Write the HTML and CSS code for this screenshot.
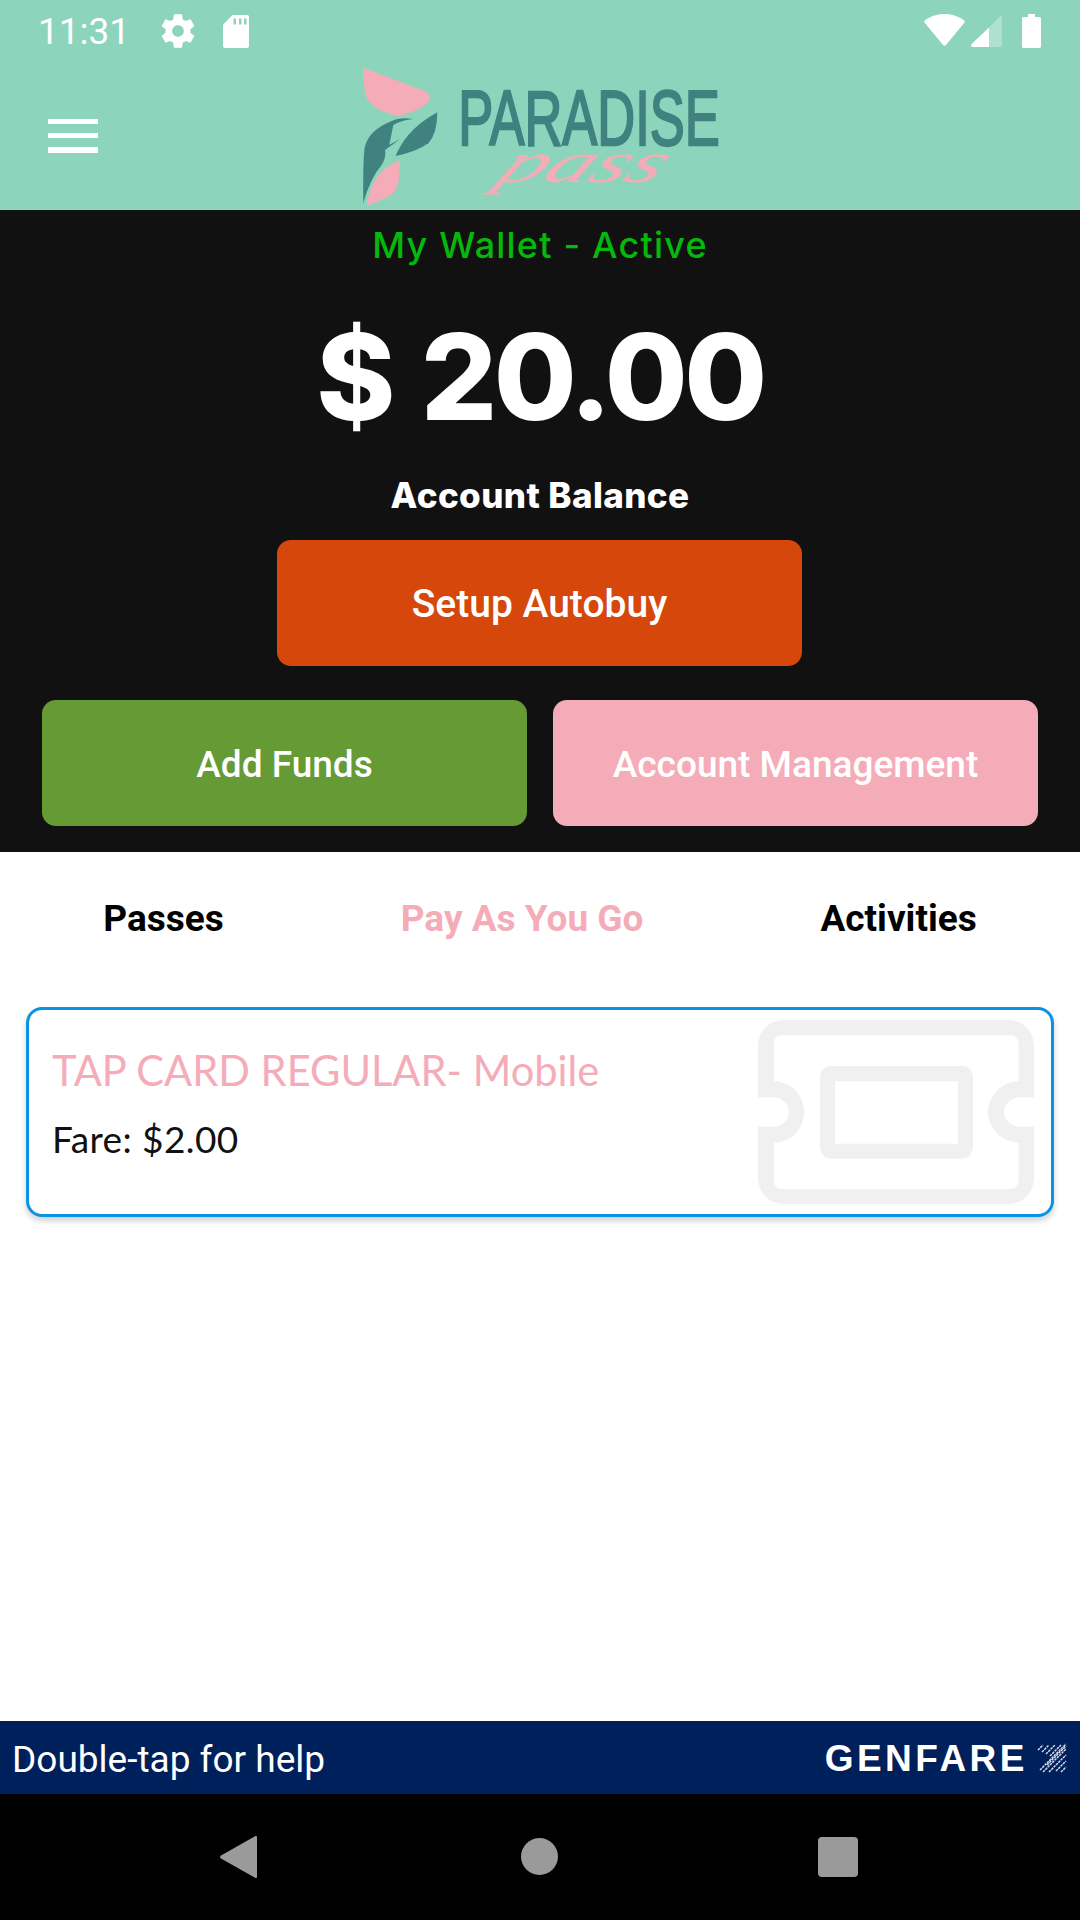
FILE: index.html
```html
<!DOCTYPE html>
<html lang="en">
<head>
<meta charset="utf-8">
<title>Paradise Pass</title>
<link rel="stylesheet" href="styles.css">
</head>
<body>
<div class="app">
  <header class="header">
    <div class="status">
      <div class="status-left">
        <span class="clock">11:31</span>
        <svg class="ic-gear" viewBox="0 0 24 24"><path fill="#fff" d="M19.43 12.98c.04-.32.07-.64.07-.98s-.03-.66-.07-.98l2.11-1.65c.19-.15.24-.42.12-.64l-2-3.46c-.12-.22-.39-.3-.61-.22l-2.49 1c-.52-.4-1.08-.73-1.69-.98l-.38-2.65C14.46 2.18 14.25 2 14 2h-4c-.25 0-.46.18-.49.42l-.38 2.65c-.61.25-1.17.59-1.69.98l-2.49-1c-.23-.09-.49 0-.61.22l-2 3.46c-.13.22-.07.49.12.64l2.11 1.65c-.04.32-.07.65-.07.98s.03.66.07.98l-2.11 1.65c-.19.15-.24.42-.12.64l2 3.46c.12.22.39.3.61.22l2.49-1c.52.4 1.08.73 1.69.98l.38 2.65c.03.24.24.42.49.42h4c.25 0 .46-.18.49-.42l.38-2.65c.61-.25 1.17-.59 1.69-.98l2.49 1c.23.09.49 0 .61-.22l2-3.46c.12-.22.07-.49-.12-.64l-2.11-1.65zM12 15.5c-1.93 0-3.5-1.57-3.5-3.5s1.57-3.5 3.5-3.5 3.5 1.57 3.5 3.5-1.57 3.5-3.5 3.5z"/></svg>
        <svg class="ic-sd" viewBox="0 0 26 33"><path fill="#fff" fill-rule="evenodd" d="M10 0h14a2 2 0 0 1 2 2v29a2 2 0 0 1-2 2H2a2 2 0 0 1-2-2V10.500a1.500 1.500 0 0 1 .5-1.200L9 .6A1.500 1.500 0 0 1 10 0zM10.500 3.500v6h2.500v-6zM16 3.500v6h2.500v-6zM21 3.500v6h2.500v-6z"/></svg>
      </div>
      <div class="status-right">
        <svg class="ic-wifi" viewBox="0 0 41 32"><path fill="#fff" d="M20.500 0C28 0 35 2.500 40.300 6.500c.6.500.7 1.300.2 1.900L22 31c-.8 1-2.200 1-3 0L.5 8.400C0 7.800.100 7 .7 6.500 6 2.500 13 0 20.500 0z"/></svg>
        <svg class="ic-signal" viewBox="0 0 31 31"><path fill="#fff" opacity=".3" d="M29 .4c.8-.7 2-.2 2 .9V29c0 1.100-.9 2-2 2H18V11.500z"/><path fill="#fff" d="M18 11.500V31H2c-1.600 0-2.400-1.900-1.300-3z"/></svg>
        <svg class="ic-battery" viewBox="0 0 19 34"><path fill="#fff" d="M6 0h7v3h4.500c.8 0 1.500.7 1.500 1.500V32.500c0 .8-.7 1.500-1.500 1.500h-16C.700 34 0 33.300 0 32.500V4.500C0 3.700.700 3 1.500 3H6z"/></svg>
      </div>
    </div>
    <div class="toolbar">
      <div class="menu"><span class="bar"></span><span class="bar"></span><span class="bar bar-last"></span></div>
      <svg class="logo" viewBox="0 39 1200 441">
        <path fill="#f5acb9" d="M70 53 L258 125 Q270 132 270 146 Q262 172 178 199 Q108 185 84 150 Q70 128 70 53z"/>
        <path fill="#408280" d="M220 207 Q180 200 150 215 Q90 240 76 285 Q68 310 70 460 Q90 385 125 345 Q140 320 135 300 L180 268 L148 284 L160 225 Q185 210 220 207z"/>
        <path fill="#408280" d="M292 187 Q240 215 205 255 Q180 285 167 318 Q230 305 265 280 Q292 250 292 187z"/>
        <path fill="#f5acb9" d="M180 330 Q125 350 100 400 Q85 430 80 467 Q130 450 160 430 Q180 410 180 330z"/>
        <text class="logo-word" transform="translate(355 284) scale(.667 1)">PARADISE</text>
        <text class="logo-script" transform="translate(462 396) skewX(-32) scale(2.100 1.350)">pass</text>
      </svg>
      <span></span>
    </div>
  </header>

  <section class="wallet">
    <h2 class="wallet-state">My Wallet - Active</h2>
    <div class="amount">$ 20.00</div>
    <div class="balance-label">Account Balance</div>
    <div class="btn btn-auto">Setup Autobuy</div>
    <div class="btn-row">
      <div class="btn btn-funds">Add Funds</div>
      <div class="btn btn-manage">Account Management</div>
    </div>
  </section>

  <main class="content">
    <nav class="tabs">
      <span class="tab">Passes</span>
      <span class="tab tab-active">Pay As You Go</span>
      <span class="tab">Activities</span>
    </nav>
    <article class="card">
      <div class="card-text">
        <div class="card-title">TAP CARD REGULAR- Mobile</div>
        <div class="card-fare">Fare: $2.00</div>
      </div>
      <svg class="ticket" viewBox="0 0 276 186" preserveAspectRatio="none">
        <path fill="#f0f0f0" fill-rule="evenodd" d="M26 0H250C266 0 276 12 276 28V78H262C254 78 246 84 246 93S254 108 262 108H276V158C276 174 266 186 250 186H26C10 186 0 174 0 158V108H14C27 108 31 98 31 93S27 78 14 78H0V28C0 12 10 0 26 0zM24 15.500C18 15.500 16 19 16 24V62C36 63 46 78 46 93S36 123 16 124V162C16 167 18 171 24 171H252C258 171 260.500 167 260.500 162V124C242 123 230 108 230 93S242 63 260.500 62V24C260.500 19 258 15.500 252 15.500zM72 46.500H205C211 46.500 215 52 215 58V128C215 134 211 140 205 140H72C66 140 62 134 62 128V58C62 52 66 46.500 72 46.500zM77 62V125H200V62z"/>
      </svg>
    </article>
  </main>

  <div class="help">
    <span class="help-text">Double-tap for help</span>
    <div class="brand">
      <span class="brand-name">GENFARE</span>
      <svg class="brand-mark" viewBox="0 0 30 30">
        <path fill="none" stroke="#d5dbe8" stroke-width="1.500" stroke-dasharray="2.500 .8" d="M1 7 6 2M5 9 12 2M9 11 18 2M13 13 24 2M10 22 29 3M3 27 29 1M6 29 29 6M12 29 29 12M19 28 29 18M24 29 29 24"/>
      </svg>
    </div>
  </div>

  <div class="navbar">
    <svg class="nav-back" viewBox="0 0 37 42"><path fill="#9a9a9a" d="M35 .3c1-.7 2-.1 2 1V40.700c0 1.100-1 1.700-2 1L1 22.500c-1.300-.8-1.300-2.200 0-3z"/></svg>
    <span class="nav-home"></span>
    <span class="nav-recent"></span>
  </div>
</div>
</body>
</html>
```

FILE: styles.css
```css
* { box-sizing: border-box; }
html, body { margin: 0; padding: 0; }
body { width: 1080px; height: 1920px; overflow: hidden; background: #fff; font-family: Roboto, sans-serif; }
.app { width: 1080px; height: 1920px; display: flex; flex-direction: column; }

.header { height: 210px; background: #8cd5bc; flex: none; }
.status { height: 63px; display: flex; justify-content: space-between; align-items: flex-start; }
.status-left { display: flex; align-items: flex-start; padding: 14px 0 0 38px; }
.clock { color: #fff; font-size: 37px; line-height: 36px; width: 87px; }
.ic-gear { width: 40px; height: 40px; margin: -3px 0 0 33px; }
.ic-sd { width: 26px; height: 33px; margin: 1px 0 0 25px; }
.status-right { display: flex; align-items: flex-start; padding: 14px 39px 0 0; }
.ic-wifi { width: 41px; height: 32px; }
.ic-signal { width: 31px; height: 31px; margin: 2px 0 0 6px; }
.ic-battery { width: 19px; height: 34px; margin-left: 20px; }

.toolbar { height: 147px; display: grid; grid-template-columns: 1fr 400px 1fr; align-items: start; }
.menu { display: flex; flex-direction: column; gap: 9px; width: 50px; margin: 56px 0 0 48px; }
.bar { height: 5px; background: #fff; display: block; }
.bar-last { height: 6px; }
.logo { width: 400px; height: 147px; display: block; }
.logo-word { font-family: "Liberation Sans", sans-serif; font-size: 236px; fill: #408280; stroke: #408280; stroke-width: 7px; }
.logo-script { font-family: "Liberation Serif", serif; font-style: italic; font-size: 130px; fill: #f5acb9; }

.wallet { height: 642px; background: #111; flex: none; display: flex; flex-direction: column; align-items: center; }
.wallet-state { margin: 14px 0 0; color: #05b80c; font-family: Inter, sans-serif; font-weight: 500; font-size: 36px; line-height: 42px; letter-spacing: 1.200px; }
.amount { margin-top: 46px; color: #fff; font-family: Inter, sans-serif; font-weight: 800; font-size: 120px; line-height: 130px; letter-spacing: -3.500px; word-spacing: 6px; }
.balance-label { margin-top: 31px; color: #fff; font-family: Inter, sans-serif; font-weight: 800; font-size: 35px; line-height: 44px; letter-spacing: .4px; }
.btn { display: flex; align-items: center; justify-content: center; height: 126px; padding-top: 2px; border-radius: 14px; color: #fff; font-size: 37px; font-weight: 500; }
.btn-auto { width: 525px; margin: 23px 1px 0 0; background: #d6470c; font-size: 39px; }
.btn-row { display: flex; gap: 26px; margin-top: 34px; }
.btn-funds { width: 485px; background: #669a35; }
.btn-manage { width: 485px; background: #f5acb9; }

.content { flex: 1; background: #fff; }
.tabs { display: flex; justify-content: center; gap: 177px; padding-top: 45px; height: 155px; }
.tab { font-size: 37px; font-weight: 700; line-height: 44px; color: #000; }
.tab-active { color: #f5acb9; }
.card { margin: 0 26px; height: 210px; border: 3px solid #0b93e3; border-radius: 16px; background: #fff; box-shadow: 0 4px 6px rgba(0,0,0,.18); display: flex; justify-content: space-between; }
.card-text { padding: 32px 0 0 23px; font-family: Lato, sans-serif; }
.card-title { color: #f5acb9; font-size: 41.600px; line-height: 56px; }
.card-fare { color: #111; font-size: 37px; line-height: 46px; margin-top: 18px; letter-spacing: .4px; }
.ticket { width: 276px; height: 184px; margin: 10px 17px 0 0; }

.help { height: 73px; background: #00205b; flex: none; display: flex; align-items: center; justify-content: space-between; padding: 0 13px 0 12px; }
.help-text { color: #fff; font-size: 37px; padding-top: 3px; }
.brand { display: flex; align-items: center; gap: 9px; }
.brand-name { color: #fff; font-family: "Liberation Sans", sans-serif; font-weight: 700; font-size: 37px; letter-spacing: 3.500px; padding-top: 2px; }
.brand-mark { width: 30px; height: 30px; display: block; }

.navbar { height: 126px; background: #000; flex: none; position: relative; }
.nav-back, .nav-home, .nav-recent { position: absolute; display: block; }
.nav-back { left: 220px; top: 42px; width: 37px; height: 42px; }
.nav-home { left: 521px; top: 44px; width: 37px; height: 37px; border-radius: 50%; background: #9a9a9a; }
.nav-recent { left: 818px; top: 43px; width: 40px; height: 40px; border-radius: 4px; background: #9a9a9a; }
```
